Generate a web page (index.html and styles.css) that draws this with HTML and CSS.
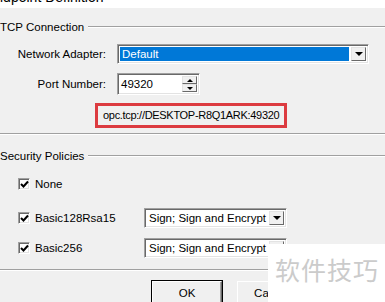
FILE: index.html
```html
<!DOCTYPE html>
<html lang="en">
<head>
    <meta charset="UTF-8">
    <title>Endpoint Definition</title>
    <link rel="stylesheet" href="styles.css">
</head>
<body>
    <div class="window">
        <div class="caption"><span class="caption-text">Endpoint Definition</span></div>

        <div class="group-head tcp-head"><span>TCP Connection</span><i class="rule"></i></div>

        <div class="field-row adapter-row">
            <label>Network Adapter:</label>
            <div class="combo adapter-combo">
                <span class="combo-value selected">Default</span>
                <span class="combo-btn"><i class="tri-down"></i></span>
            </div>
        </div>

        <div class="field-row port-row">
            <label>Port Number:</label>
            <div class="spin">
                <span class="spin-value">49320</span>
                <span class="spin-btns">
                    <span class="spin-btn"><i class="tri-up-small"></i></span>
                    <span class="spin-btn"><i class="tri-down-small"></i></span>
                </span>
            </div>
        </div>

        <div class="url-row">
            <div class="url-box">opc.tcp://DESKTOP-R8Q1ARK:49320</div>
        </div>

        <div class="separator first-sep"></div>

        <div class="group-head security-head"><span>Security Policies</span><i class="rule"></i></div>

        <div class="policy-row none-row">
            <span class="check"><svg width="9" height="9" viewBox="0 0 9 9"><path d="M1 4 L3.5 6.5 L8 1.5" fill="none" stroke="#000" stroke-width="2"/></svg></span>
            <span class="policy-name">None</span>
        </div>

        <div class="policy-row rsa-row">
            <span class="check"><svg width="9" height="9" viewBox="0 0 9 9"><path d="M1 4 L3.5 6.5 L8 1.5" fill="none" stroke="#000" stroke-width="2"/></svg></span>
            <span class="policy-name">Basic128Rsa15</span>
            <div class="combo policy-combo">
                <span class="combo-value">Sign; Sign and Encrypt</span>
                <span class="combo-btn"><i class="tri-down"></i></span>
            </div>
        </div>

        <div class="policy-row b256-row">
            <span class="check"><svg width="9" height="9" viewBox="0 0 9 9"><path d="M1 4 L3.5 6.5 L8 1.5" fill="none" stroke="#000" stroke-width="2"/></svg></span>
            <span class="policy-name">Basic256</span>
            <div class="combo policy-combo">
                <span class="combo-value">Sign; Sign and Encrypt</span>
                <span class="combo-btn"><i class="tri-down"></i></span>
            </div>
        </div>

        <div class="separator second-sep"></div>

        <div class="buttons">
            <button class="btn default">OK</button>
            <button class="btn">Cancel</button>
        </div>

        <!-- watermark pasted over the corner -->
        <div class="watermark">软件技巧</div>
    </div>
</body>
</html>
```

FILE: styles.css
```css
body {
    margin: 0;
    padding: 0;
    background: #f0f0f0;
    font-family: "Liberation Sans", Arial, sans-serif;
    font-size: 11px;
    color: #000;
}
.window {
    position: relative;
    width: 385px;
    height: 302px;
    overflow: hidden;
}
.caption {
    height: 8px;
    overflow: hidden;
    background: #fff;
}
.caption-text {
    display: block;
    margin-top: -10px;
    margin-left: -14px;
    font-size: 14px;
    line-height: 14px;
}
.group-head {
    display: flex;
    align-items: center;
    height: 14px;
    font-size: 11.5px;
}
.group-head .rule {
    flex: 1;
    margin-left: 4px;
    border-top: 1px solid #a0a0a0;
    border-bottom: 1px solid #fff;
}
.tcp-head {
    margin-top: 12px;
}
.field-row {
    display: flex;
    align-items: center;
}
.field-row label {
    width: 106px;
    margin-right: 11px;
    text-align: right;
    font-size: 11.5px;
}
.adapter-row {
    margin-top: 10px;
}
.port-row {
    margin-top: 9px;
}
.combo {
    display: flex;
    box-sizing: border-box;
    height: 20px;
    padding: 2px;
    background: #fff;
    border-top: 1px solid #a0a0a0;
    border-left: 1px solid #a0a0a0;
    border-right: 1px solid #fff;
    border-bottom: 1px solid #fff;
    box-shadow: inset 1px 1px 0 #696969, inset -1px -1px 0 #e3e3e3;
}
.adapter-combo {
    width: 252px;
}
.combo-value {
    flex: 1;
    padding-left: 2px;
    line-height: 14px;
    white-space: nowrap;
    overflow: hidden;
    font-size: 11.5px;
}
.combo-value.selected {
    background: #0078d7;
    color: #fff;
    margin-right: 2px;
}
.combo-btn {
    display: flex;
    align-items: center;
    justify-content: center;
    width: 15px;
    box-sizing: border-box;
    background: #f0f0f0;
    border-top: 1px solid #e3e3e3;
    border-left: 1px solid #e3e3e3;
    border-right: 1px solid #696969;
    border-bottom: 1px solid #696969;
}
.tri-down {
    width: 0;
    height: 0;
    border-left: 4px solid transparent;
    border-right: 4px solid transparent;
    border-top: 4px solid #000;
}
.spin {
    display: flex;
    box-sizing: border-box;
    width: 83px;
    height: 22px;
    padding: 2px;
    background: #fff;
    border-top: 1px solid #a0a0a0;
    border-left: 1px solid #a0a0a0;
    border-right: 1px solid #fff;
    border-bottom: 1px solid #fff;
    box-shadow: inset 1px 1px 0 #696969, inset -1px -1px 0 #e3e3e3;
}
.spin-value {
    flex: 1;
    padding-left: 1px;
    line-height: 16px;
    font-size: 11.5px;
}
.spin-btns {
    display: flex;
    flex-direction: column;
    width: 15px;
}
.spin-btn {
    flex: 1;
    display: flex;
    align-items: center;
    justify-content: center;
    background: #f0f0f0;
    border-top: 1px solid #e3e3e3;
    border-left: 1px solid #e3e3e3;
    border-right: 1px solid #696969;
    border-bottom: 1px solid #696969;
}
.tri-up-small {
    width: 0;
    height: 0;
    border-left: 3px solid transparent;
    border-right: 3px solid transparent;
    border-bottom: 3px solid #000;
}
.tri-down-small {
    width: 0;
    height: 0;
    border-left: 3px solid transparent;
    border-right: 3px solid transparent;
    border-top: 3px solid #000;
}
.url-row {
    margin-top: 8px;
    padding-left: 95px;
}
.url-box {
    box-sizing: border-box;
    width: 192px;
    height: 25px;
    padding-left: 5px;
    border: 3px solid #dc3b40;
    line-height: 19px;
    font-size: 11px;
    letter-spacing: -0.3px;
    white-space: nowrap;
}
.separator {
    border-top: 1px solid #a0a0a0;
    border-bottom: 1px solid #fff;
}
.first-sep {
    margin-top: 5px;
}
.security-head {
    margin-top: 14px;
}
.policy-row {
    display: flex;
    align-items: center;
    padding-left: 18px;
}
.check {
    display: flex;
    align-items: center;
    justify-content: center;
    box-sizing: border-box;
    width: 12px;
    height: 12px;
    background: #fff;
    border-top: 1px solid #a0a0a0;
    border-left: 1px solid #a0a0a0;
    border-right: 1px solid #fff;
    border-bottom: 1px solid #fff;
    box-shadow: inset 1px 1px 0 #696969, inset -1px -1px 0 #e3e3e3;
}
.policy-name {
    width: 109px;
    margin-left: 5px;
    font-size: 11.5px;
}
.none-row {
    height: 16px;
    margin-top: 13px;
}
.rsa-row {
    margin-top: 16px;
}
.b256-row {
    margin-top: 10px;
}
.policy-combo {
    width: 143px;
}
.second-sep {
    margin-top: 11px;
}
.buttons {
    display: flex;
    gap: 15px;
    margin-top: 10px;
    padding-left: 152px;
}
.btn {
    width: 70px;
    height: 23px;
    padding: 0;
    background: #f0f0f0;
    font-family: "Liberation Sans", Arial, sans-serif;
    font-size: 11.5px;
    color: #000;
    border-top: 1px solid #fff;
    border-left: 1px solid #fff;
    border-right: 1px solid #696969;
    border-bottom: 1px solid #696969;
    box-shadow: inset -1px -1px 0 #a0a0a0;
}
.btn.default {
    outline: 1px solid #000;
}
.watermark {
    position: absolute;
    left: 268px;
    top: 244px;
    width: 117px;
    height: 58px;
    box-sizing: border-box;
    padding: 10px 0 0 7px;
    background: #fff;
    color: #cbcbcb;
    font-family: "Noto Sans CJK SC", sans-serif;
    font-size: 25px;
    line-height: 30px;
    letter-spacing: 1px;
}
```
